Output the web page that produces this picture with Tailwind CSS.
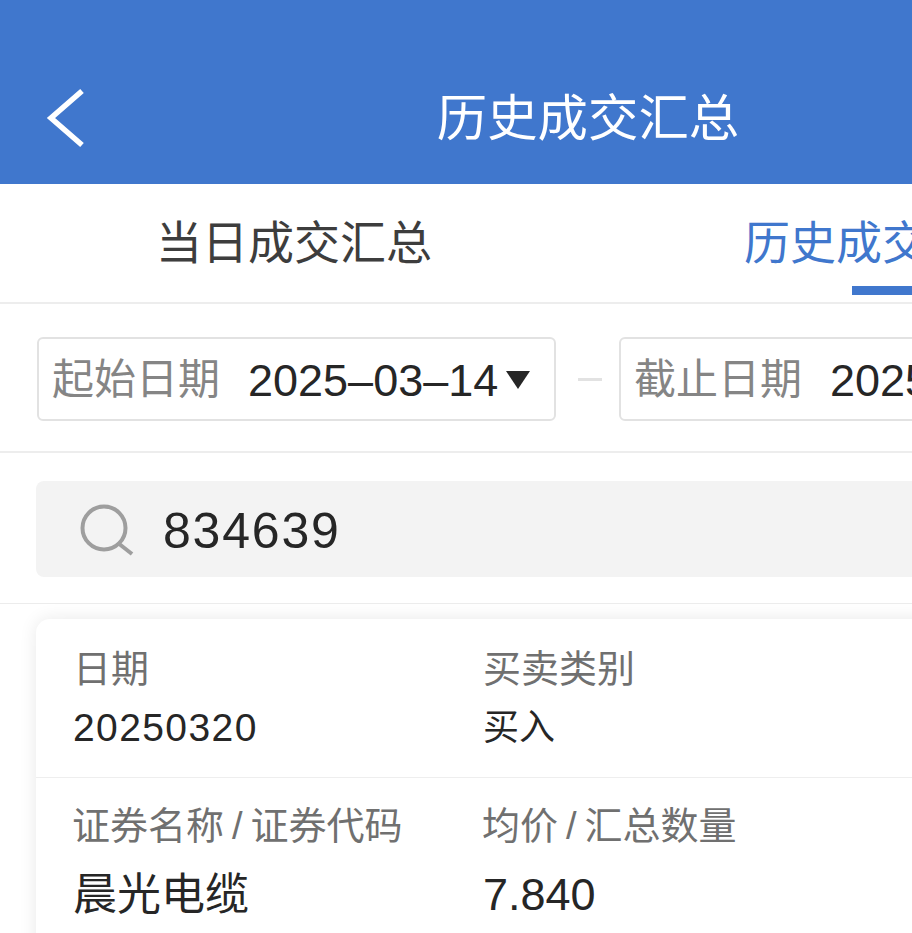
<!DOCTYPE html>
<html lang="en">
<head>
  <meta charset="UTF-8" />
  <title>历史成交汇总</title>
  <script src="https://cdn.jsdelivr.net/npm/@tailwindcss/browser@4"></script>
</head>
<body class="w-[912px] h-[933px] overflow-hidden bg-white font-['Liberation_Sans','Noto_Sans_CJK_SC',sans-serif] text-[#262626]">
  <div class="w-[1176px]">

    <!-- Header -->
    <header class="h-[184px] bg-[#4077cd] flex items-end justify-center relative pb-[30px]">
      <svg class="absolute left-[44px] top-[86px]" width="44" height="64" viewBox="0 0 44 64" fill="none">
        <path d="M38 5 L7 32 L38 59" stroke="#fff" stroke-width="5.5" fill="none" />
      </svg>
      <h1 class="text-[50.4px] leading-[70px] text-white">历史成交汇总</h1>
    </header>

    <!-- Tabs -->
    <nav class="h-[120px] grid grid-cols-2 border-b-2 border-[#ededed]">
      <div class="flex items-center justify-center text-[46px] text-[#3d3d3d]">当日成交汇总</div>
      <div class="relative flex items-center justify-center text-[46px] text-[#4077cd]">
        历史成交汇总
        <span class="absolute bottom-[7px] left-[264px] w-[60px] h-[9px] bg-[#4077cd]"></span>
      </div>
    </nav>

    <!-- Date range -->
    <section class="h-[149px] flex items-center pl-[37px] pt-[3px] border-b-2 border-[#ededed]">
      <div class="w-[519px] h-[84px] border-2 border-[#e2e2e2] rounded-[6px] flex items-center pl-[13px]">
        <span class="text-[42px] text-[#858585] w-[196px]">起始日期</span>
        <span class="text-[45px] leading-none pt-[2px]">2025–03–14</span>
        <span class="ml-[8px] mt-[2px] w-0 h-0 border-x-[12px] border-x-transparent border-t-[18px] border-t-[#262626]"></span>
      </div>
      <span class="w-[24px] h-[3px] bg-[#e2e2e2] ml-[22px] mr-[17px]"></span>
      <div class="w-[519px] h-[84px] border-2 border-[#e2e2e2] rounded-[6px] flex items-center pl-[13px]">
        <span class="text-[42px] text-[#858585] w-[196px]">截止日期</span>
        <span class="text-[45px] leading-none pt-[2px]">2025–03–21</span>
      </div>
    </section>

    <!-- Search -->
    <section class="h-[151px] pt-[28px] pl-[36px] border-b border-[#ececec]">
      <div class="w-[1104px] h-[96px] bg-[#f3f3f3] rounded-[8px] flex items-center pl-[44px]">
        <svg width="54" height="52" viewBox="0 0 54 52" fill="none" class="mt-[2px]">
          <circle cx="24" cy="24" r="21.5" stroke="#9e9e9e" stroke-width="4" />
          <path d="M38 39 L52 50" stroke="#9e9e9e" stroke-width="4" />
        </svg>
        <span class="ml-[29px] pt-[3px] text-[50px] tracking-[1.8px] leading-none">834639</span>
      </div>
    </section>

    <!-- Result card -->
    <section class="pt-[15px] px-[36px]">
      <article class="bg-white rounded-t-[14px] shadow-[0_0_18px_rgba(0,0,0,0.09)] h-[400px]">
        <div class="h-[159px] grid grid-cols-[410px_1fr] pl-[37px] pt-[26px] border-b border-[#eeeeee]">
          <div>
            <p class="text-[38px] leading-[48px] text-[#707070]">日期</p>
            <p class="text-[39px] leading-[48px] mt-[11px] tracking-[1.4px]">20250320</p>
          </div>
          <div>
            <p class="text-[38px] leading-[48px] text-[#707070]">买卖类别</p>
            <p class="text-[36px] leading-[48px] mt-[11px]">买入</p>
          </div>
        </div>
        <div class="grid grid-cols-[410px_1fr] pl-[37px] pt-[24px]">
          <div>
            <p class="-ml-[1px] text-[38px] leading-[48px] text-[#707070]">证券名称<span class="mx-[8px]">/</span>证券代码</p>
            <p class="text-[44px] leading-[60px] mt-[15px]">晨光电缆</p>
          </div>
          <div>
            <p class="-ml-[1px] text-[38px] leading-[48px] text-[#707070]">均价<span class="mx-[8px]">/</span>汇总数量</p>
            <p class="text-[45px] leading-[60px] mt-[15px]">7.840</p>
          </div>
        </div>
      </article>
    </section>

  </div>
</body>
</html>
